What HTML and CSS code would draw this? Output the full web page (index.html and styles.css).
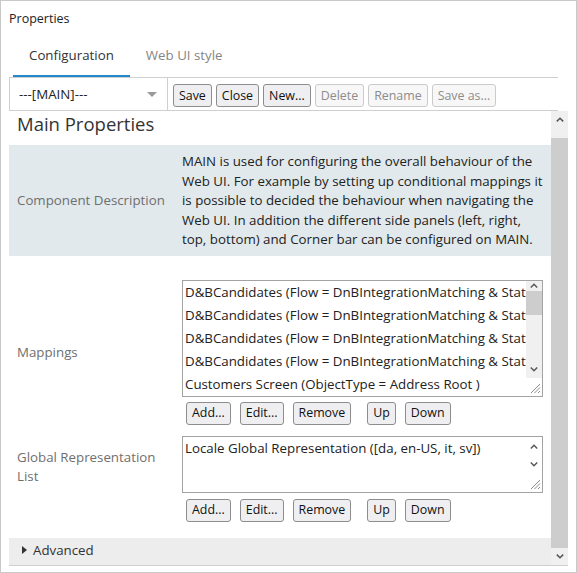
FILE: index.html
```html
<!DOCTYPE html>
<html>
<head>
<meta charset="utf-8">
<link rel="stylesheet" href="styles.css">
</head>
<body>
<div class="window">
  <div class="title">Properties</div>
  <div class="tabs">
    <div class="tab active">Configuration</div>
    <div class="tab">Web UI style</div>
  </div>
  <div class="panel">
    <div class="toolbar">
      <div class="select">
        <span class="select-value">---[MAIN]---</span>
        <span class="caret"></span>
      </div>
      <div class="tb-buttons">
        <button class="btn">Save</button>
        <button class="btn">Close</button>
        <button class="btn">New...</button>
        <button class="btn" disabled>Delete</button>
        <button class="btn" disabled>Rename</button>
        <button class="btn" disabled>Save as...</button>
      </div>
    </div>
    <div class="scrollarea">
      <div class="content">
        <h1 class="heading">Main Properties</h1>
        <div class="desc">
          <div class="label">Component Description</div>
          <div class="desc-text">MAIN is used for configuring the overall behaviour of the Web UI. For example by setting up conditional mappings it is possible to decided the behaviour when navigating the Web UI. In addition the different side panels (left, right, top, bottom) and Corner bar can be configured on MAIN.</div>
        </div>

        <div class="field field-mappings">
          <div class="label">Mappings</div>
          <div class="control">
            <div class="listbox list-tall">
              <div class="items">
                <div class="item">D&amp;BCandidates (Flow = DnBIntegrationMatching &amp; State = Candidates)</div>
                <div class="item">D&amp;BCandidates (Flow = DnBIntegrationMatching &amp; State = Candidates)</div>
                <div class="item">D&amp;BCandidates (Flow = DnBIntegrationMatching &amp; State = Candidates)</div>
                <div class="item">D&amp;BCandidates (Flow = DnBIntegrationMatching &amp; State = Candidates)</div>
                <div class="item">Customers Screen (ObjectType = Address Root )</div>
              </div>
              <div class="vscroll">
                <div class="sb-btn sb-up-small"><svg width="8" height="5" viewBox="0 0 8 5"><path d="M0.8 4.4 L4 1.2 L7.2 4.4" fill="none" stroke="#555" stroke-width="1.4"/></svg></div>
                <div class="sb-thumb-small"></div>
                <div class="sb-track"></div>
                <div class="sb-btn sb-down-small"><svg width="8" height="5" viewBox="0 0 8 5"><path d="M0.8 0.6 L4 3.8 L7.2 0.6" fill="none" stroke="#555" stroke-width="1.4"/></svg></div>
                <div class="grip"><svg width="11" height="11" viewBox="0 0 11 11"><path d="M10 1 L1 10 M10 4.5 L4.5 10 M10 8 L8 10" stroke="#8a8a8a" stroke-width="1"/></svg></div>
              </div>
            </div>
            <div class="btnrow">
              <button class="btn">Add...</button>
              <button class="btn">Edit...</button>
              <button class="btn">Remove</button>
              <button class="btn btn-up">Up</button>
              <button class="btn">Down</button>
            </div>
          </div>
        </div>

        <div class="field field-global">
          <div class="label label-top">Global Representation List</div>
          <div class="control">
            <div class="listbox list-short">
              <div class="items">
                <div class="item">Locale Global Representation ([da, en-US, it, sv])</div>
              </div>
              <div class="vscroll vscroll-plain">
                <div class="sb-btn sb-up-plain"><svg width="8" height="5" viewBox="0 0 8 5"><path d="M0.8 4.4 L4 1.2 L7.2 4.4" fill="none" stroke="#555" stroke-width="1.4"/></svg></div>
                <div class="sb-btn sb-down-plain"><svg width="8" height="5" viewBox="0 0 8 5"><path d="M0.8 0.6 L4 3.8 L7.2 0.6" fill="none" stroke="#555" stroke-width="1.4"/></svg></div>
                <div class="grip"><svg width="11" height="11" viewBox="0 0 11 11"><path d="M10 1 L1 10 M10 4.5 L4.5 10 M10 8 L8 10" stroke="#8a8a8a" stroke-width="1"/></svg></div>
              </div>
            </div>
            <div class="btnrow btnrow-2">
              <button class="btn">Add...</button>
              <button class="btn">Edit...</button>
              <button class="btn">Remove</button>
              <button class="btn btn-up">Up</button>
              <button class="btn">Down</button>
            </div>
          </div>
        </div>

        <div class="advanced">
          <span class="tri"></span>
          <span>Advanced</span>
        </div>
      </div>
      <div class="scrollbar">
        <div class="msb-btn"><svg width="8" height="5" viewBox="0 0 8 5"><path d="M0.8 4.4 L4 1.2 L7.2 4.4" fill="none" stroke="#555" stroke-width="1.5"/></svg></div>
        <div class="msb-gap"></div>
        <div class="msb-thumb"></div>
        <div class="msb-btn"><svg width="8" height="5" viewBox="0 0 8 5"><path d="M0.8 0.6 L4 3.8 L7.2 0.6" fill="none" stroke="#555" stroke-width="1.5"/></svg></div>
      </div>
    </div>
  </div>
</div>
</body>
</html>
```
FILE: styles.css
```css
* { box-sizing: border-box; }
html, body { margin: 0; padding: 0; background: #fff; }
body {
  font-family: "Open Sans", "Noto Sans", sans-serif;
  font-size: 13.3px;
  color: #222;
}
.window {
  width: 577px;
  height: 573px;
  border: 1px solid #c9c9c9;
  overflow: hidden;
}
.title {
  height: 37px;
  line-height: 36px;
  padding-left: 8px;
  font-size: 12.5px;
  color: #222;
}
.tabs {
  display: flex;
  margin-left: 12px;
  height: 39px;
}
.tab {
  padding: 7px 16px 10px;
  line-height: 20px;
  font-size: 13.3px;
  color: #858585;
  border-bottom: 2px solid transparent;
}
.tab.active {
  color: #333;
  border-bottom-color: #2188cc;
}
.panel {
  margin-left: 8px;
  width: 559px;
}
.toolbar {
  display: flex;
  height: 34px;
  border-top: 1px solid #cfcfcf;
  border-bottom: 1px solid #cfcfcf;
  margin-right: 10px;
}
.select {
  width: 159px;
  display: flex;
  align-items: center;
  justify-content: space-between;
  border-left: 1px solid #cfcfcf;
  border-right: 1px solid #cfcfcf;
  padding: 0 10px 0 9px;
  font-size: 13.3px;
  color: #222;
}
.caret {
  width: 0;
  height: 0;
  border-left: 5px solid transparent;
  border-right: 5px solid transparent;
  border-top: 5px solid #9a9a9a;
}
.tb-buttons {
  display: flex;
  gap: 4px;
  margin-left: 5px;
  padding-top: 6px;
}
.btn {
  height: 23px;
  padding: 0 5px;
  font-family: "Open Sans", "Noto Sans", sans-serif;
  font-size: 12.4px;
  color: #111;
  background: #efeff1;
  border: 1px solid #8d8d8d;
  border-radius: 3px;
  line-height: 20px;
}
.btn:disabled {
  color: #8c8c8c;
  background: #f7f7f8;
  border-color: #cbcbcb;
}
.scrollarea {
  display: flex;
  height: 455px;
  border-bottom: 1px solid #cfcfcf;
}
.content {
  width: 542px;
  display: flex;
  flex-direction: column;
}
.heading {
  margin: 0;
  padding: 1px 0 0 8px;
  line-height: 24px;
  height: 26px;
  font-size: 18.5px;
  font-weight: normal;
  color: #333;
}
.desc {
  margin-top: 8px;
  display: flex;
  background: #e1e9ec;
  padding: 7px 0 6px;
}
.label {
  width: 173px;
  flex: none;
  padding: 0 10px 0 8px;
  color: #6f6f6f;
  font-size: 13.3px;
  line-height: 19px;
  align-self: center;
}
.desc-text {
  width: 362px;
  line-height: 19.5px;
  color: #222;
}
.field {
  display: flex;
}
.field-mappings { margin-top: 24px; }
.field-global { margin-top: 11px; }
.label-top {
  align-self: flex-start;
  padding-top: 12px;
}
.control {
  width: 361px;
  display: flex;
  flex-direction: column;
}
.listbox {
  display: flex;
  border: 1px solid #a3a3a3;
  background: #fff;
}
.list-tall { height: 117px; }
.list-short { height: 57px; }
.items {
  flex: 1;
  overflow: hidden;
  min-width: 0;
}
.item {
  height: 23px;
  line-height: 23px;
  padding-left: 2px;
  white-space: nowrap;
  overflow: hidden;
  color: #222;
}
.vscroll {
  width: 16px;
  flex: none;
  display: flex;
  flex-direction: column;
  background: #f0f0f0;
}
.vscroll-plain { background: #fff; }
.sb-btn {
  display: flex;
  justify-content: center;
  align-items: center;
}
.sb-up-small { height: 10px; background: #f0f0f0; }
.sb-thumb-small { height: 24px; background: #cdcdcd; }
.sb-track { height: 47px; }
.sb-down-small { height: 16px; background: #f0f0f0; }
.sb-up-plain { height: 17px; padding-top: 2px; }
.sb-down-plain { height: 20px; padding-top: 2px; }
.grip {
  flex: 1;
  background: #fff;
  display: flex;
  align-items: flex-end;
  justify-content: flex-end;
  padding: 0 1px 2px 0;
}
.btnrow {
  display: flex;
  gap: 9px;
  margin-top: 5px;
  padding-left: 4px;
}
.btnrow .btn {
  padding: 0 5px;
}
.btnrow-2 { margin-top: 6px; }
.btn-up { margin-left: 7px; }
.advanced {
  margin-top: 16px;
  height: 27px;
  background: #ededed;
  display: flex;
  align-items: center;
  padding-left: 13px;
  padding-bottom: 2px;
  color: #333;
  font-size: 13.3px;
}
.tri {
  width: 0;
  height: 0;
  border-top: 4px solid transparent;
  border-bottom: 4px solid transparent;
  border-left: 5px solid #333;
  margin-right: 6px;
}
.scrollbar {
  width: 17px;
  display: flex;
  flex-direction: column;
  background: #f0f0f0;
}
.msb-btn {
  height: 17px;
  display: flex;
  align-items: center;
  justify-content: center;
}
.msb-gap { height: 10px; }
.msb-thumb {
  flex: 1;
  background: #cdcdcd;
}
```
